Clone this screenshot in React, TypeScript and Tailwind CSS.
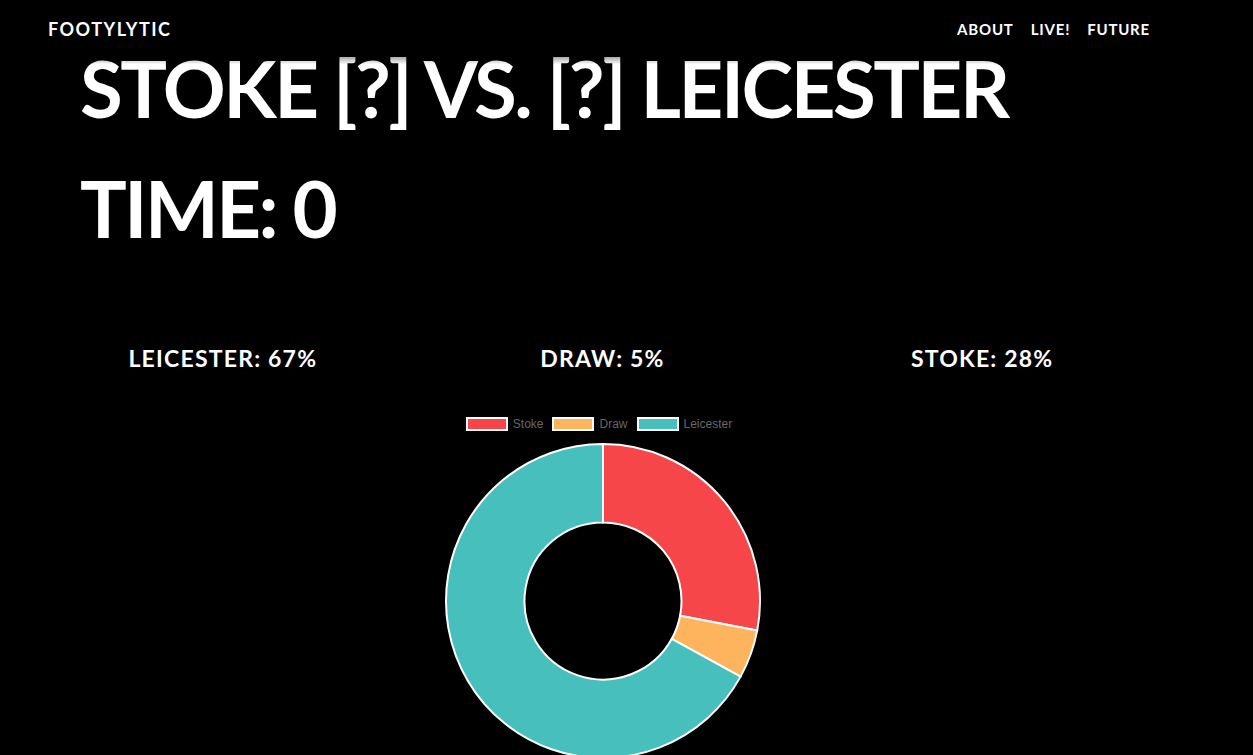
import React from 'react';

const slices = [
  { label: 'Stoke', value: 28, color: '#F7464A' },
  { label: 'Draw', value: 5, color: '#FDB45C' },
  { label: 'Leicester', value: 67, color: '#46BFBD' },
];

const R = 157;
const r = 78.5;
const C = 159;

const pt = (radius: number, deg: number) => {
  const a = ((deg - 90) * Math.PI) / 180;
  return `${(C + radius * Math.cos(a)).toFixed(2)} ${(C + radius * Math.sin(a)).toFixed(2)}`;
};

const arcPath = (start: number, end: number) => {
  const large = end - start > 180 ? 1 : 0;
  return [
    `M ${pt(R, start)}`,
    `A ${R} ${R} 0 ${large} 1 ${pt(R, end)}`,
    `L ${pt(r, end)}`,
    `A ${r} ${r} 0 ${large} 0 ${pt(r, start)}`,
    'Z',
  ].join(' ');
};

const Donut = () => {
  let acc = 0;
  return (
    <svg width={318} height={318} viewBox="0 0 318 318">
      {slices.map((s) => {
        const start = (acc / 100) * 360;
        acc += s.value;
        const end = (acc / 100) * 360;
        return <path key={s.label} d={arcPath(start, end)} fill={s.color} stroke="#fff" strokeWidth={2} />;
      })}
    </svg>
  );
};

const odds = [
  { team: 'LEICESTER', pct: 67 },
  { team: 'DRAW', pct: 5 },
  { team: 'STOKE', pct: 28 },
];

export default function App() {
  return (
    <div className="min-h-[755px] bg-black text-white" style={{ fontFamily: 'Lato, "Open Sans", sans-serif' }}>
      <nav className="flex h-[58px] items-center justify-between pr-[103px] pl-[48px]">
        <a className="text-[18px] font-bold tracking-[1.5px]">FOOTYLYTIC</a>
        <div className="flex gap-[17px] text-[15px] font-bold tracking-[0.8px]">
          <a>ABOUT</a>
          <a>LIVE!</a>
          <a>FUTURE</a>
        </div>
      </nav>

      <div className="-mt-[12px] pl-[80px]">
        <h1 className="bg-gradient-to-b from-[#a0a0a0] from-[12%] to-white to-[22%] bg-clip-text text-[78px] leading-[84px] font-bold tracking-[-2.5px] text-transparent">
          STOKE [?] VS. [?] LEICESTER
        </h1>
        <h2 className="mt-[36px] text-[78px] leading-[84px] font-bold tracking-[-2.5px]">TIME: 0</h2>
      </div>

      <div className="mt-[91px] ml-[33px] grid w-[1139px] grid-cols-3 text-center text-[23px] font-bold tracking-[1.2px]">
        {odds.map((o) => (
          <div key={o.team}>
            {o.team}: {o.pct}%
          </div>
        ))}
      </div>

      <div className="mt-[39px] flex flex-col items-center pr-[52px]">
        <div
          className="flex items-center gap-[6px] text-[12px] text-[#666]"
          style={{ fontFamily: '"Liberation Sans", Arial, sans-serif' }}
        >
          {slices.map((s) => (
            <div key={s.label} className="mr-[3px] flex items-center gap-[5px]">
              <span className="h-[14px] w-[42px] border-2 border-white" style={{ backgroundColor: s.color }} />
              <span>{s.label}</span>
            </div>
          ))}
        </div>
        <div className="mt-[9px] pl-[5px]">
          <Donut />
        </div>
      </div>
    </div>
  );
}
